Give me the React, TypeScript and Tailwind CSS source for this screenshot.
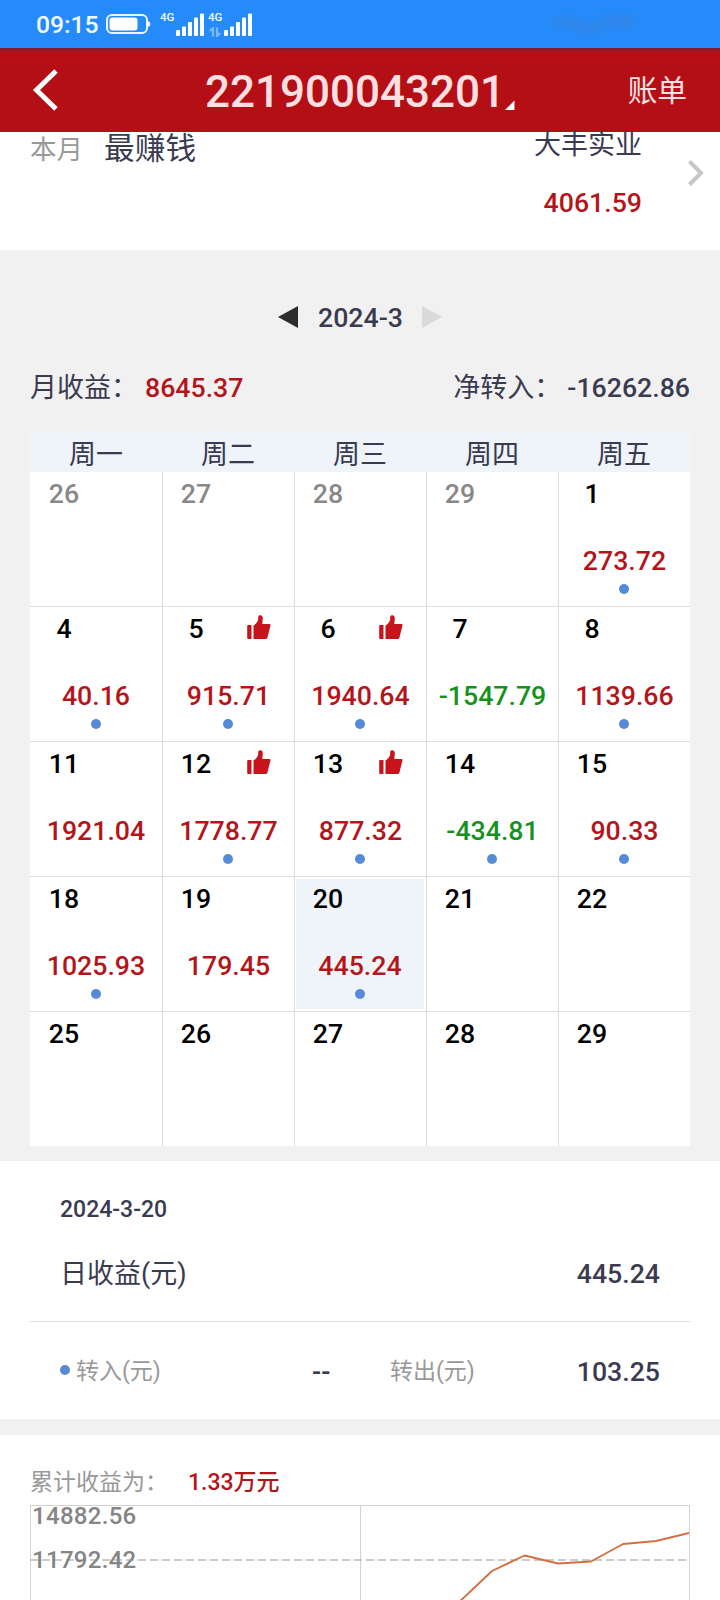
type Day = {
  day: number;
  value?: string;
  dot?: boolean;
  liked?: boolean;
  outside?: boolean;
  selected?: boolean;
};

const weekdays = ["周一", "周二", "周三", "周四", "周五"];

const weeks: Day[][] = [
  [
    { day: 26, outside: true },
    { day: 27, outside: true },
    { day: 28, outside: true },
    { day: 29, outside: true },
    { day: 1, value: "273.72", dot: true },
  ],
  [
    { day: 4, value: "40.16", dot: true },
    { day: 5, value: "915.71", dot: true, liked: true },
    { day: 6, value: "1940.64", dot: true, liked: true },
    { day: 7, value: "-1547.79" },
    { day: 8, value: "1139.66", dot: true },
  ],
  [
    { day: 11, value: "1921.04" },
    { day: 12, value: "1778.77", dot: true, liked: true },
    { day: 13, value: "877.32", dot: true, liked: true },
    { day: 14, value: "-434.81", dot: true },
    { day: 15, value: "90.33", dot: true },
  ],
  [
    { day: 18, value: "1025.93", dot: true },
    { day: 19, value: "179.45" },
    { day: 20, value: "445.24", dot: true, selected: true },
    { day: 21 },
    { day: 22 },
  ],
  [{ day: 25 }, { day: 26 }, { day: 27 }, { day: 28 }, { day: 29 }],
];

function Signal() {
  return (
    <svg width="29" height="24" viewBox="0 0 29 24" fill="#fff">
      <rect x="0" y="17" width="4" height="6" rx="1" />
      <rect x="6" y="13.5" width="4" height="9.5" rx="1" />
      <rect x="12" y="9" width="4" height="14" rx="1" />
      <rect x="18" y="4.5" width="4" height="18.5" rx="1" />
      <rect x="24" y="0.5" width="4" height="22.5" rx="1" />
    </svg>
  );
}

function StatusBar() {
  return (
    <div className="flex h-12 shrink-0 items-start bg-[#258bfb] pl-9 text-[#f4fbff]">
      <span className="mt-[13px] w-[62px] text-[24.700px] leading-[24px] font-medium whitespace-nowrap">09:15</span>
      <svg className="mt-[13px] ml-[7px]" width="46" height="22" viewBox="0 0 46 22">
        <rect x="2" y="2" width="40" height="18" rx="5" fill="none" stroke="#eaf6ff" strokeWidth="2" />
        <rect x="4.5" y="4.5" width="28" height="13" rx="3" fill="#fff" />
        <path d="M43 8v6c1.800-.6 2.300-1.600 2.300-3s-.5-2.400-2.300-3z" fill="#eaf6ff" />
      </svg>
      <span className="mt-[12px] ml-[9px] w-4 text-[11.500px] leading-[11px] font-medium">4G</span>
      <div className="mt-[13px]">
        <Signal />
      </div>
      <div className="mt-[12px] ml-[3px] flex w-4 flex-col">
        <span className="text-[11.500px] leading-[11px] font-medium">4G</span>
        <svg className="mt-[4px] ml-[1px]" width="12" height="10" viewBox="0 0 12 10" fill="none" stroke="#7dbbfd" strokeWidth="2.200">
          <path d="M4 9.500V1L0.800 4M8 .5V9l3.200-3" />
        </svg>
      </div>
      <div className="mt-[13px]">
        <Signal />
      </div>
      <svg className="ml-[293px]" width="100" height="44" viewBox="0 0 100 44">
        <defs>
          <filter id="haze" x="-20%" y="-50%" width="140%" height="200%">
            <feGaussianBlur stdDeviation="2.500" />
          </filter>
        </defs>
        <g filter="url(#haze)" fill="#3b80d6" opacity=".4">
          <rect x="6" y="16" width="30" height="12" rx="5" />
          <rect x="24" y="22" width="34" height="12" rx="5" />
          <rect x="52" y="14" width="36" height="14" rx="5" />
          <circle cx="81" cy="27" r="4" />
        </g>
      </svg>
    </div>
  );
}

function TitleBar() {
  return (
    <div className="flex h-[84px] shrink-0 items-center bg-[linear-gradient(#861c30_0,#9c1a26_3px,#bb0e13_5px,#b30f15_24px)] pl-[32px] text-[#ffe0e2]">
      <svg width="28" height="44" viewBox="0 0 28 44" fill="none" stroke="#fff" strokeWidth="5">
        <path d="M24 3L4.500 22 24 41" />
      </svg>
      <div className="mt-[3px] ml-[145px] flex w-[310px] items-end">
        <span className="text-[44px] leading-[48px] font-medium">221900043201</span>
        <svg className="mb-[5px]" width="11" height="11" viewBox="0 0 11 11" fill="#fff">
          <path d="M10.500 0v10.500H0z" />
        </svg>
      </div>
      <span className="mt-[2px] ml-auto pr-[33px] text-[29.700px] leading-[32px]">账单</span>
    </div>
  );
}

function DayCell({ item, first, last }: { item: Day; first: boolean; last: boolean }) {
  return (
    <div
      className={`${first ? "" : "border-l"} ${last ? "h-[134px]" : "h-[135px] border-b"} border-[#dedede] bg-white ${
        item.selected ? "pt-[2px] pr-[2px] pb-[2px] pl-px" : ""
      }`}
    >
      <div className={`flex h-full flex-col items-center ${item.selected ? "bg-[#eff4f9]" : "pt-[2px]"}`}>
        <div className={`flex h-[39px] w-full shrink-0 items-center ${first ? "pl-[4px]" : item.selected ? "pl-[2px]" : "pl-[3px]"}`}>
          <span className={`w-[60px] text-center text-[26.700px] leading-[32px] font-medium ${item.outside ? "text-[#888]" : "text-black"}`}>
            {item.day}
          </span>
          {item.liked && (
            <svg className="mb-[2px] ml-[21px]" width="24" height="25" viewBox="0 0 24 25" fill="#c5141b">
              <path d="M1.200 10H4.500V24H1.200Q.2 24 .2 23V11Q.2 10 1.200 10z" />
              <path d="M6.500 24V10.500C9 9 10.800 6.500 11.200 4.500V2.200C11.200.8 12.200.2 13.300.2 15 .2 15.800 1.600 15.800 3.200L15.300 9H22.500Q23.700 9 23.500 10.200L20.300 23Q20 24 19 24z" />
            </svg>
          )}
        </div>
        <div className="mt-[32px] flex h-[32px] shrink-0 items-center">
          {item.value && (
            <span
              className={`text-[26.700px] leading-[32px] font-medium ${item.value.startsWith("-") ? "text-[#15921b]" : "text-[#b5141a]"}`}
            >
              {item.value}
            </span>
          )}
        </div>
        {item.dot && (
          <span className={`mt-[7px] size-[10px] shrink-0 rounded-full bg-[#548ad8] ${first || item.selected ? "" : "mr-px"}`} />
        )}
      </div>
    </div>
  );
}

function Calendar() {
  return (
    <section className="flex h-[911px] shrink-0 flex-col bg-[#f1f1f1] px-[30px]">
      <div className="mt-[51px] flex h-[32px] items-center justify-center">
        <svg width="20" height="22" viewBox="0 0 20 22" fill="#2d2d2f">
          <path d="M20 0v22L0 11z" />
        </svg>
        <span className="mx-[20px] mt-px w-[84px] text-center text-[26.700px] leading-[32px] font-medium whitespace-nowrap text-[#3a3b50]">2024-3</span>
        <svg width="20" height="22" viewBox="0 0 20 22" fill="#dadada">
          <path d="M0 0v22l20-11z" />
        </svg>
      </div>
      <div className="mt-[39px] flex h-[32px] items-center text-[27px] leading-[32px] text-[#3a3b50]">
        <span>月收益：</span>
        <span className="ml-[7px] text-[26.700px] font-medium text-[#b5141a]">8645.37</span>
        <span className="ml-auto">净转入：</span>
        <span className="ml-[6px] text-[26.700px] font-medium">-16262.86</span>
      </div>
      <div className="mt-[29px] grid h-[39px] grid-cols-5 bg-[#eff4fa] pt-[6px] text-center text-[27px] leading-[32px] text-[#3a3b50]">
        {weekdays.map((name) => (
          <span key={name}>{name}</span>
        ))}
      </div>
      <div className="grid grid-cols-5">
        {weeks.map((week, row) =>
          week.map((item, col) => (
            <DayCell key={`${row}-${col}`} item={item} first={col === 0} last={row === weeks.length - 1} />
          )),
        )}
      </div>
    </section>
  );
}

export default function App() {
  return (
    <div className="flex h-[1600px] w-[720px] flex-col overflow-hidden bg-white font-['Roboto','Noto_Sans_CJK_SC',sans-serif] text-[#3a3b50]">
      <StatusBar />
      <TitleBar />

      <section className="flex h-[118px] shrink-0 bg-white pl-[30px]">
        <span className="mt-[2px] text-[26.500px] leading-[32px] text-[#999]">本月</span>
        <span className="mt-px ml-[21px] text-[30.700px] leading-[32px]">最赚钱</span>
        <div className="ml-auto flex flex-col items-end">
          <span className="text-[27px] leading-[27px]">大丰实业</span>
          <span className="mt-[28px] text-[26.700px] leading-[32px] font-medium text-[#b5141a]">4061.59</span>
        </div>
        <svg className="mt-[27px] mr-[15px] ml-[45px]" width="18" height="28" viewBox="0 0 18 28" fill="none" stroke="#c6c6c6" strokeWidth="4">
          <path d="M2.500 2.500L14 14 2.500 25.500" />
        </svg>
      </section>

      <Calendar />

      <section className="flex h-[258px] shrink-0 flex-col px-[30px]">
        <span className="mt-[33px] pl-[30px] text-[23px] leading-[32px] font-medium">2024-3-20</span>
        <div className="mt-[32px] flex h-[32px] items-center justify-between px-[30px] text-[27px] leading-[32px]">
          <span>日收益(元)</span>
          <span className="text-[26.700px] font-medium">445.24</span>
        </div>
        <div className="mt-[31px] h-px shrink-0 bg-[#e0e0e0]" />
        <div className="mt-[34px] flex h-[32px] items-center pl-[30px] text-[23px] leading-[32px] text-[#999]">
          <span className="mb-[4px] size-[10px] rounded-full bg-[#548ad8]" />
          <span className="ml-[6px] w-[236px]">转入(元)</span>
          <span className="w-[78px] text-[27px] font-medium text-[#3a3b50]">--</span>
          <span>转出(元)</span>
          <span className="mr-[30px] ml-auto text-[26.700px] font-medium text-[#3a3b50]">103.25</span>
        </div>
      </section>

      <div className="h-[16px] shrink-0 bg-[#f1f1f1]" />

      <section className="flex h-[165px] shrink-0 flex-col overflow-hidden px-[30px]">
        <div className="mt-[32px] flex h-[32px] shrink-0 items-center text-[23px] leading-[32px]">
          <span className="text-[#999]">累计收益为：</span>
          <span className="ml-[20px] font-medium text-[#b5141a]">1.33万元</span>
        </div>
        <svg className="mt-[6px] shrink-0 overflow-visible" width="660" height="95" viewBox="0 0 660 95" fill="none">
          <path d="M.5 95V.5H659.500V95M330.500 0V95" stroke="#d2d2d2" />
          <path d="M0 55H660" stroke="#bcbcbc" strokeWidth="1.600" strokeDasharray="8 4" />
          <text x="2" y="19" fill="#858585" fontSize="24" fontWeight="500" letterSpacing=".3">14882.56</text>
          <text x="2" y="63" fill="#858585" fontSize="24" fontWeight="500" letterSpacing=".3">11792.42</text>
          <path d="M426 100L462 66 494.500 50.500 528 58.500 561 56.500 593 39 626 36 659 28" stroke="#d36f40" strokeWidth="1.900" strokeLinejoin="round" />
        </svg>
      </section>
    </div>
  );
}
